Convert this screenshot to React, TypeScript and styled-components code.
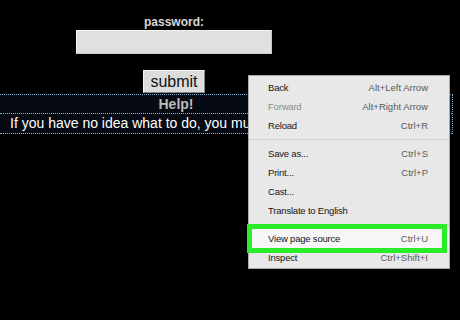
import * as React from 'react';
import styled, { createGlobalStyle, css } from 'styled-components';

const GlobalStyle = createGlobalStyle`
  html, body {
    margin: 0;
    padding: 0;
    background: #000;
  }
`;

const Page = styled.div`
  position: relative;
  width: 460px;
  height: 320px;
  overflow: hidden;
  background: #000;
  font-family: 'Liberation Sans', Arial, sans-serif;
`;

const Form = styled.div`
  width: 348px;
  padding-top: 15px;
  display: flex;
  flex-direction: column;
  align-items: center;
`;

const Label = styled.div`
  font-size: 12px;
  font-weight: bold;
  line-height: 14px;
  color: #d8d8d8;
`;

const Field = styled.div`
  margin-top: 1px;
  width: 196px;
  height: 24px;
  box-sizing: border-box;
  background: #e0e0e0;
  border: 1px solid #f2f2f2;
  border-right-color: #c8c8c8;
  border-bottom-color: #c8c8c8;
`;

const Submit = styled.button`
  margin-top: 16px;
  width: 62px;
  height: 23px;
  padding: 0;
  box-sizing: border-box;
  background: #dcdcdc;
  border: 1px solid #f4f4f4;
  border-right-color: #8a8a8a;
  border-bottom-color: #8a8a8a;
  font-family: 'Liberation Sans', Arial, sans-serif;
  font-size: 16px;
  color: #111;
`;

const HelpBox = styled.div`
  margin-top: 1px;
  width: 453px;
  box-sizing: border-box;
  background: #060a12;
  border-top: 1px dotted #86b6d6;
  border-right: 1px dotted #86b6d6;
`;

const HelpTitle = styled.div`
  width: 352px;
  height: 18px;
  line-height: 18px;
  text-align: center;
  font-size: 14px;
  font-weight: bold;
  color: #bdbdbd;
`;

const HelpRow = styled.div<{ $text?: boolean }>`
  border-bottom: 1px dotted #86b6d6;
  ${p =>
    p.$text &&
    css`
      height: 19px;
      line-height: 19px;
      padding-left: 10px;
      font-size: 14px;
      color: #fff;
    `}
`;

/* the context menu hides the rest of the sentence */
const Clip = styled.div`
  width: 238px;
  white-space: nowrap;
  overflow: hidden;
`;

const Menu = styled.div`
  position: absolute;
  left: 248px;
  top: 75px;
  width: 202px;
  box-sizing: border-box;
  padding: 2px 0 1px;
  background: #e8e8e8;
  border: 1px solid #a9a9a9;
  box-shadow: 1px 1px 2px rgba(0, 0, 0, 0.4);
  font-size: 9.5px;
`;

const Item = styled.div<{ $disabled?: boolean; $hot?: boolean }>`
  position: relative;
  height: 19px;
  display: flex;
  align-items: center;
  justify-content: space-between;
  padding: 0 21px 0 19px;
  color: ${p => (p.$disabled ? '#8c8c8c' : '#161616')};
  ${p =>
    p.$hot &&
    css`
      background: #f6f6f6;
      z-index: 2;
      &::after {
        content: '';
        position: absolute;
        left: -2px;
        right: 2px;
        top: -5px;
        bottom: -5px;
        border: 5px solid #2aec2a;
      }
    `}
`;

const Name = styled.span`
  letter-spacing: -0.2px;
`;

const Keys = styled.span`
  color: #5a5a5a;
`;

const Separator = styled.div`
  height: 9px;
  display: flex;
  align-items: center;
  &::before {
    content: '';
    flex: 1;
    height: 1px;
    background: #d2d2d2;
  }
`;

type Entry = { label: string; keys?: string; disabled?: boolean; hot?: boolean } | 'sep';

const entries: Entry[] = [
  { label: 'Back', keys: 'Alt+Left Arrow' },
  { label: 'Forward', keys: 'Alt+Right Arrow', disabled: true },
  { label: 'Reload', keys: 'Ctrl+R' },
  'sep',
  { label: 'Save as...', keys: 'Ctrl+S' },
  { label: 'Print...', keys: 'Ctrl+P' },
  { label: 'Cast...' },
  { label: 'Translate to English' },
  'sep',
  { label: 'View page source', keys: 'Ctrl+U', hot: true },
  { label: 'Inspect', keys: 'Ctrl+Shift+I' },
];

export default function App() {
  return (
    <Page>
      <GlobalStyle />
      <Form>
        <Label>password:</Label>
        <Field />
        <Submit>submit</Submit>
      </Form>
      <HelpBox>
        <HelpRow>
          <HelpTitle>Help!</HelpTitle>
        </HelpRow>
        <HelpRow $text>
          <Clip>If you have no idea what to do, you must look at the page source</Clip>
        </HelpRow>
      </HelpBox>
      <Menu>
        {entries.map((e, i) =>
          e === 'sep' ? (
            <Separator key={i} />
          ) : (
            <Item key={i} $disabled={e.disabled} $hot={e.hot}>
              <Name>{e.label}</Name>
              {e.keys && <Keys>{e.keys}</Keys>}
            </Item>
          )
        )}
      </Menu>
    </Page>
  );
}
